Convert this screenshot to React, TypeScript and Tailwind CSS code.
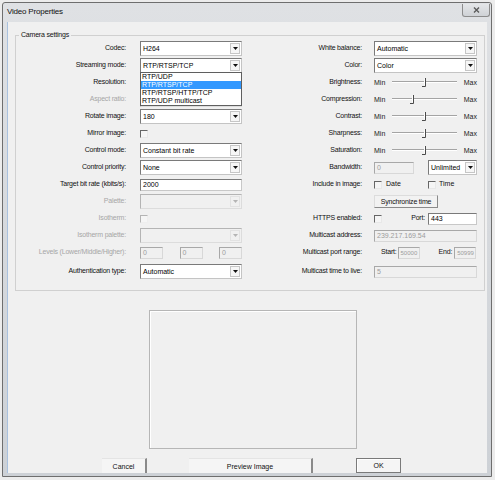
import React from "react";

function Arrow({ off }: { off?: boolean }) {
  return (
    <span
      className={`mr-[1px] flex h-[11px] w-[10px] items-center justify-center border ${
        off ? "border-[#e2e2e2] bg-[#f0f0f0]" : "border-[#c6c6c6] bg-[#f6f6f6]"
      }`}
    >
      <svg width="5" height="3" viewBox="0 0 5 3">
        <path d="M0 0H5L2.5 3Z" fill={off ? "#b4b4b4" : "#111"} />
      </svg>
    </span>
  );
}

function Select({ value = "", off, className = "w-full" }: { value?: string; off?: boolean; className?: string }) {
  return (
    <div
      className={`flex h-[15px] items-center border ${
        off
          ? "border-[#dcdcdc] border-t-[#b4b4b4] border-l-[#b4b4b4] bg-[#f0f0f0] text-[#a0a0a0]"
          : "border-[#c4c4c4] border-t-[#7a7a7a] border-l-[#7a7a7a] bg-white text-black"
      } ${className}`}
    >
      <span className="flex-1 overflow-hidden whitespace-nowrap pl-[2px] leading-none">{value}</span>
      <Arrow off={off} />
    </div>
  );
}

function Input({ value = "", off, className = "w-full" }: { value?: string; off?: boolean; className?: string }) {
  return (
    <div
      className={`flex h-[12px] items-center overflow-hidden whitespace-nowrap border pl-[2px] leading-none ${
        off
          ? "border-[#d8d8d8] border-t-[#a8a8a8] border-l-[#a8a8a8] bg-[#f0f0f0] text-[#9c9c9c]"
          : "border-[#c8c8c8] border-t-[#7a7a7a] border-l-[#7a7a7a] bg-white text-black"
      } ${className}`}
    >
      {value}
    </div>
  );
}

function Check({ off }: { off?: boolean }) {
  return (
    <span
      className={`inline-block h-[8px] w-[8px] shrink-0 border ${
        off ? "border-[#eeeeee] border-t-[#b4b4b4] border-l-[#b4b4b4]" : "border-[#e8e8e8] border-t-[#666666] border-l-[#666666]"
      } bg-[#f5f5f5]`}
    />
  );
}

function Slider({ at }: { at: number }) {
  return (
    <div className="flex w-full items-center text-[#222]">
      <span className="w-[18px] leading-none">Min</span>
      <div className="relative h-[11px] w-[65px]">
        <div className="absolute left-0 right-0 top-[4px] h-[2px] border-t border-b border-t-[#a4a4a4] border-b-white" />
        <svg className="absolute top-[1px]" style={{ left: at - 4 }} width="6" height="10" viewBox="0 0 6 10">
          <path d="M4.5 0V8.5M1 8.5H4.5" stroke="#4a4a4a" strokeWidth="1" fill="none" />
          <path d="M3.5 0.5V7.5" stroke="#ffffff" strokeWidth="1" />
        </svg>
      </div>
      <span className="flex-1 text-right leading-none">Max</span>
    </div>
  );
}

function LRow({ label, off, children, className = "" }: { label: string; off?: boolean; children?: React.ReactNode; className?: string }) {
  return (
    <div className={`flex h-[17px] items-center ${className}`}>
      <span className={`w-[110px] text-right tracking-[-0.2px] ${off ? "text-[#a6a6a6]" : "text-[#111]"}`}>{label}</span>
      <div className="ml-[14px] flex w-[102px] items-center">{children}</div>
    </div>
  );
}

function RRow({ label, children, className = "" }: { label: string; children?: React.ReactNode; className?: string }) {
  return (
    <div className={`flex h-[17px] items-center ${className}`}>
      <span className="w-[120px] text-right tracking-[-0.2px] text-[#111]">{label}</span>
      <div className="ml-[12px] flex w-[103px] items-center">{children}</div>
    </div>
  );
}

const modes = ["RTP/UDP", "RTP/RTSP/TCP", "RTP/RTSP/HTTP/TCP", "RTP/UDP multicast"];

export default function App() {
  return (
    <div className="h-[480px] w-[495px] overflow-hidden bg-[#ececec] pl-[2px] pt-[2px] font-['Liberation_Sans',Arial,sans-serif] text-[7px]">
      <div className="flex h-[475px] w-[490px] flex-col rounded-t-[3px] border border-[#6e6e6e] bg-gradient-to-b from-[#dfe1e4] to-[#cdd1d6]">
        {/* title bar */}
        <div className="flex h-[19px] items-start justify-between">
          <span className="pl-[4px] pt-[5px] text-[8px] leading-none tracking-[-0.2px] text-[#111]">Video Properties</span>
          <div className="mr-[1px] mt-[1px] flex h-[13px] w-[28px] items-center justify-center rounded-b-[3px] border border-t-0 border-[#8c8c8c] bg-gradient-to-b from-[#e4e6e8] to-[#cfd2d6]">
            <svg width="7" height="6" viewBox="0 0 7 6">
              <path d="M1 0.5L6 5.5M6 0.5L1 5.5" stroke="#5a5a5a" strokeWidth="1.4" />
            </svg>
          </div>
        </div>

        {/* client area */}
        <div className="ml-[4px] flex h-[451px] w-[480px] flex-col overflow-hidden border-l border-[#a9c1de] bg-[#f0f0f0]">
          <fieldset className="ml-[7px] mt-[8px] w-[470px] border border-[#d0d0d0] pb-[10px]">
            <legend className="ml-[3px] h-[10px] px-[2px] leading-[10px] tracking-[-0.2px] text-[#111]">Camera settings</legend>
            <div className="flex">
              <div className="flex flex-col">
                <LRow label="Codec:">
                  <Select value="H264" />
                </LRow>
                <LRow label="Streaming mode:">
                  <div className="relative w-full">
                    <Select value="RTP/RTSP/TCP" />
                    <div className="absolute left-0 top-[14px] z-10 w-full border border-[#5f5f5f] bg-white">
                      {modes.map((m) => (
                        <div
                          key={m}
                          className={`h-[8px] whitespace-nowrap pl-[1px] leading-[8px] ${
                            m === "RTP/RTSP/TCP" ? "bg-[#3399ff] text-white" : "text-black"
                          }`}
                        >
                          {m}
                        </div>
                      ))}
                    </div>
                  </div>
                </LRow>
                <LRow label="Resolution:">
                  <Select />
                </LRow>
                <LRow label="Aspect ratio:" off>
                  <Select off />
                </LRow>
                <LRow label="Rotate image:">
                  <Select value="180" />
                </LRow>
                <LRow label="Mirror image:">
                  <Check />
                </LRow>
                <LRow label="Control mode:">
                  <Select value="Constant bit rate" />
                </LRow>
                <LRow label="Control priority:">
                  <Select value="None" />
                </LRow>
                <LRow label="Target bit rate (kbits/s):">
                  <Input value="2000" />
                </LRow>
                <LRow label="Palette:" off>
                  <Select off />
                </LRow>
                <LRow label="Isotherm:" off>
                  <Check off />
                </LRow>
                <LRow label="Isotherm palette:" off>
                  <Select off />
                </LRow>
                <LRow label="Levels (Lower/Middle/Higher):" off>
                  <div className="flex w-full justify-between">
                    <Input value="0" off className="w-[23px]" />
                    <Input value="0" off className="w-[23px]" />
                    <Input value="0" off className="w-[23px]" />
                  </div>
                </LRow>
                <LRow label="Authentication type:" className="mt-[2px]">
                  <Select value="Automatic" />
                </LRow>
              </div>

              <div className="flex flex-col">
                <RRow label="White balance:">
                  <Select value="Automatic" />
                </RRow>
                <RRow label="Color:">
                  <Select value="Color" />
                </RRow>
                <RRow label="Brightness:">
                  <Slider at={33} />
                </RRow>
                <RRow label="Compression:">
                  <Slider at={21} />
                </RRow>
                <RRow label="Contrast:">
                  <Slider at={33} />
                </RRow>
                <RRow label="Sharpness:">
                  <Slider at={33} />
                </RRow>
                <RRow label="Saturation:">
                  <Slider at={33} />
                </RRow>
                <RRow label="Bandwidth:">
                  <div className="flex w-full items-center justify-between">
                    <Input value="0" off className="w-[40px]" />
                    <Select value="Unlimited" className="h-[13px] w-[49px]" />
                  </div>
                </RRow>
                <RRow label="Include in image:">
                  <div className="flex w-full items-center">
                    <Check />
                    <span className="ml-[4px] w-[42px] text-[#111]">Date</span>
                    <Check />
                    <span className="ml-[3px] text-[#111]">Time</span>
                  </div>
                </RRow>
                <RRow label="">
                  <button className="flex h-[13px] w-[64px] items-center justify-center border border-[#8a8a8a] border-t-[#dcdcdc] border-l-[#dcdcdc] bg-[#f2f2f2] leading-none tracking-[-0.2px] text-[#111]">
                    Synchronize time
                  </button>
                </RRow>
                <RRow label="HTTPS enabled:">
                  <div className="flex w-full items-center">
                    <Check />
                    <span className="w-[43px] text-right tracking-[-0.2px] text-[#111]">Port:</span>
                    <Input value="443" className="ml-[3px] w-[49px]" />
                  </div>
                </RRow>
                <RRow label="Multicast address:">
                  <Input value="239.217.169.54" off />
                </RRow>
                <RRow label="Multicast port range:">
                  <div className="flex w-full items-center">
                    <span className="ml-[7px] tracking-[-0.2px] text-[#111]">Start:</span>
                    <Input value="50000" off className="ml-[1px] w-[22px] text-[6px]" />
                    <span className="ml-[19px] tracking-[-0.2px] text-[#111]">End:</span>
                    <Input value="50999" off className="ml-[2px] w-[22px] text-[6px]" />
                  </div>
                </RRow>
                <RRow label="Multicast time to live:" className="mt-[2px]">
                  <Input value="5" off />
                </RRow>
              </div>
            </div>
          </fieldset>

          {/* preview */}
          <div className="ml-[141px] mt-[19px] h-[140px] w-[208px] border border-[#b6b6b6] shadow-[inset_1px_1px_0_#ffffff]" />

          {/* buttons */}
          <div className="mt-[9px] flex text-[#111]">
            <button className="ml-[94px] flex h-[15px] w-[45px] items-center justify-center border-r-2 border-t border-[#8a8a8a] border-t-[#e4e4e4] bg-[#f5f5f5] leading-none">
              Cancel
            </button>
            <button className="ml-[42px] flex h-[15px] w-[124px] items-center justify-center border-r-2 border-t border-[#8a8a8a] border-t-[#e4e4e4] bg-[#f5f5f5] leading-none">
              Preview Image
            </button>
            <button className="ml-[43px] flex h-[15px] w-[45px] items-center justify-center border border-[#7a7a7a] bg-[#f5f5f5] leading-none shadow-[inset_1px_1px_0_#ffffff]">
              OK
            </button>
          </div>
        </div>
      </div>
    </div>
  );
}
